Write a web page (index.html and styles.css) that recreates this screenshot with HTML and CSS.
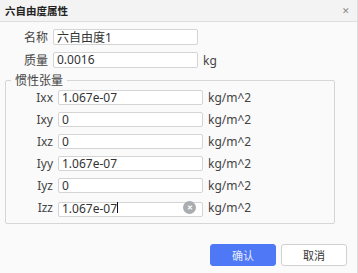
FILE: index.html
```html
<!DOCTYPE html>
<html lang="zh-CN">
<head>
    <meta charset="UTF-8">
    <meta name="viewport" content="width=device-width, initial-scale=1.0">
    <title>六自由度属性</title>
    <link rel="stylesheet" href="styles.css">
</head>
<body>
    <div class="dialog">
        <div class="titlebar">
            <span class="title">六自由度属性</span>
            <span class="close">&#x2715;</span>
        </div>

        <div class="form">
            <div class="row">
                <label class="label">名称</label>
                <input class="field" type="text" value="六自由度1">
            </div>
            <div class="row">
                <label class="label">质量</label>
                <input class="field" type="text" value="0.0016">
                <span class="unit">kg</span>
            </div>

            <fieldset class="group">
                <legend>惯性张量</legend>
                <div class="row small">
                    <label class="label">Ixx</label>
                    <input class="field" type="text" value="1.067e-07">
                    <span class="unit">kg/m^2</span>
                </div>
                <div class="row small">
                    <label class="label">Ixy</label>
                    <input class="field" type="text" value="0">
                    <span class="unit">kg/m^2</span>
                </div>
                <div class="row small">
                    <label class="label">Ixz</label>
                    <input class="field" type="text" value="0">
                    <span class="unit">kg/m^2</span>
                </div>
                <div class="row small">
                    <label class="label">Iyy</label>
                    <input class="field" type="text" value="1.067e-07">
                    <span class="unit">kg/m^2</span>
                </div>
                <div class="row small">
                    <label class="label">Iyz</label>
                    <input class="field" type="text" value="0">
                    <span class="unit">kg/m^2</span>
                </div>
                <div class="row small">
                    <label class="label">Izz</label>
                    <div class="field-wrap">
                        <input class="field" type="text" value="1.067e-07">
                        <span class="caret"></span>
                        <span class="clear">&#x2715;</span>
                    </div>
                    <span class="unit">kg/m^2</span>
                </div>
            </fieldset>
        </div>

        <div class="buttons">
            <button class="btn primary">确认</button>
            <button class="btn">取消</button>
        </div>
    </div>
</body>
</html>
```

FILE: styles.css
```css
* {
    box-sizing: border-box;
}

body {
    margin: 0;
    font-family: "Noto Sans", "Noto Sans CJK SC", sans-serif;
    font-size: 12px;
    color: #333;
    background: #fafafa;
}

.dialog {
    width: 358px;
    height: 273px;
    border-right: 1px solid #dcdcdc;
    background: #fafafa;
}

.titlebar {
    height: 22px;
    display: flex;
    align-items: center;
    justify-content: space-between;
    padding: 0 7px 0 5px;
    background: #f3f3f3;
    border-bottom: 1px solid #dedede;
}

.title {
    font-family: "Noto Sans CJK SC", sans-serif;
    font-size: 10.5px;
    font-weight: bold;
    color: #222;
}

.close {
    font-size: 9px;
    color: #888;
}

.form {
    padding-top: 7px;
}

.row {
    display: flex;
    align-items: center;
    height: 16px;
}

.row + .row {
    margin-top: 7px;
}

.row.small {
    height: 15px;
}

.label {
    width: 53px;
    padding-right: 5px;
    text-align: right;
    font-family: "Noto Sans", "Noto Sans CJK SC", sans-serif;
    color: #444;
}

.field {
    width: 145px;
    height: 100%;
    margin: 0;
    padding: 0 3px 1px;
    border: 1px solid #d4d4d4;
    border-radius: 2px;
    background: #fff;
    font-family: "Noto Sans", "Noto Sans CJK SC", sans-serif;
    font-size: 12px;
    color: #333;
    outline: none;
}

.field-wrap {
    position: relative;
    width: 145px;
    height: 100%;
}

.field-wrap .field {
    width: 100%;
}

.caret {
    position: absolute;
    left: 59px;
    top: 2px;
    width: 1px;
    height: 11px;
    background: #111;
}

.clear {
    position: absolute;
    right: 7px;
    top: 1px;
    width: 13px;
    height: 13px;
    border-radius: 50%;
    background: #a9acb1;
    color: #fff;
    font-size: 7px;
    font-weight: bold;
    line-height: 13px;
    text-align: center;
}

.unit {
    margin-left: 5px;
    color: #444;
}

.group {
    margin: 4px 22px 0 5px;
    padding: 2px 0 8px;
    border: 1px solid #d6d6d6;
    border-radius: 2px;
}

.group .label {
    width: 52px;
}

.group legend {
    margin-left: 5px;
    padding: 0 4px;
    line-height: 16px;
    font-family: "Noto Sans CJK SC", sans-serif;
    color: #444;
}

.buttons {
    display: flex;
    justify-content: flex-end;
    gap: 5px;
    margin-top: 20px;
    padding-right: 10px;
}

.btn {
    width: 66px;
    height: 22px;
    border: 1px solid #d0d0d0;
    border-radius: 3px;
    background: #fff;
    font-family: "Noto Sans CJK SC", sans-serif;
    font-size: 11px;
    color: #333;
}

.btn.primary {
    border-color: #4e78f5;
    background: #4e78f5;
    color: #e4eaff;
}
```
